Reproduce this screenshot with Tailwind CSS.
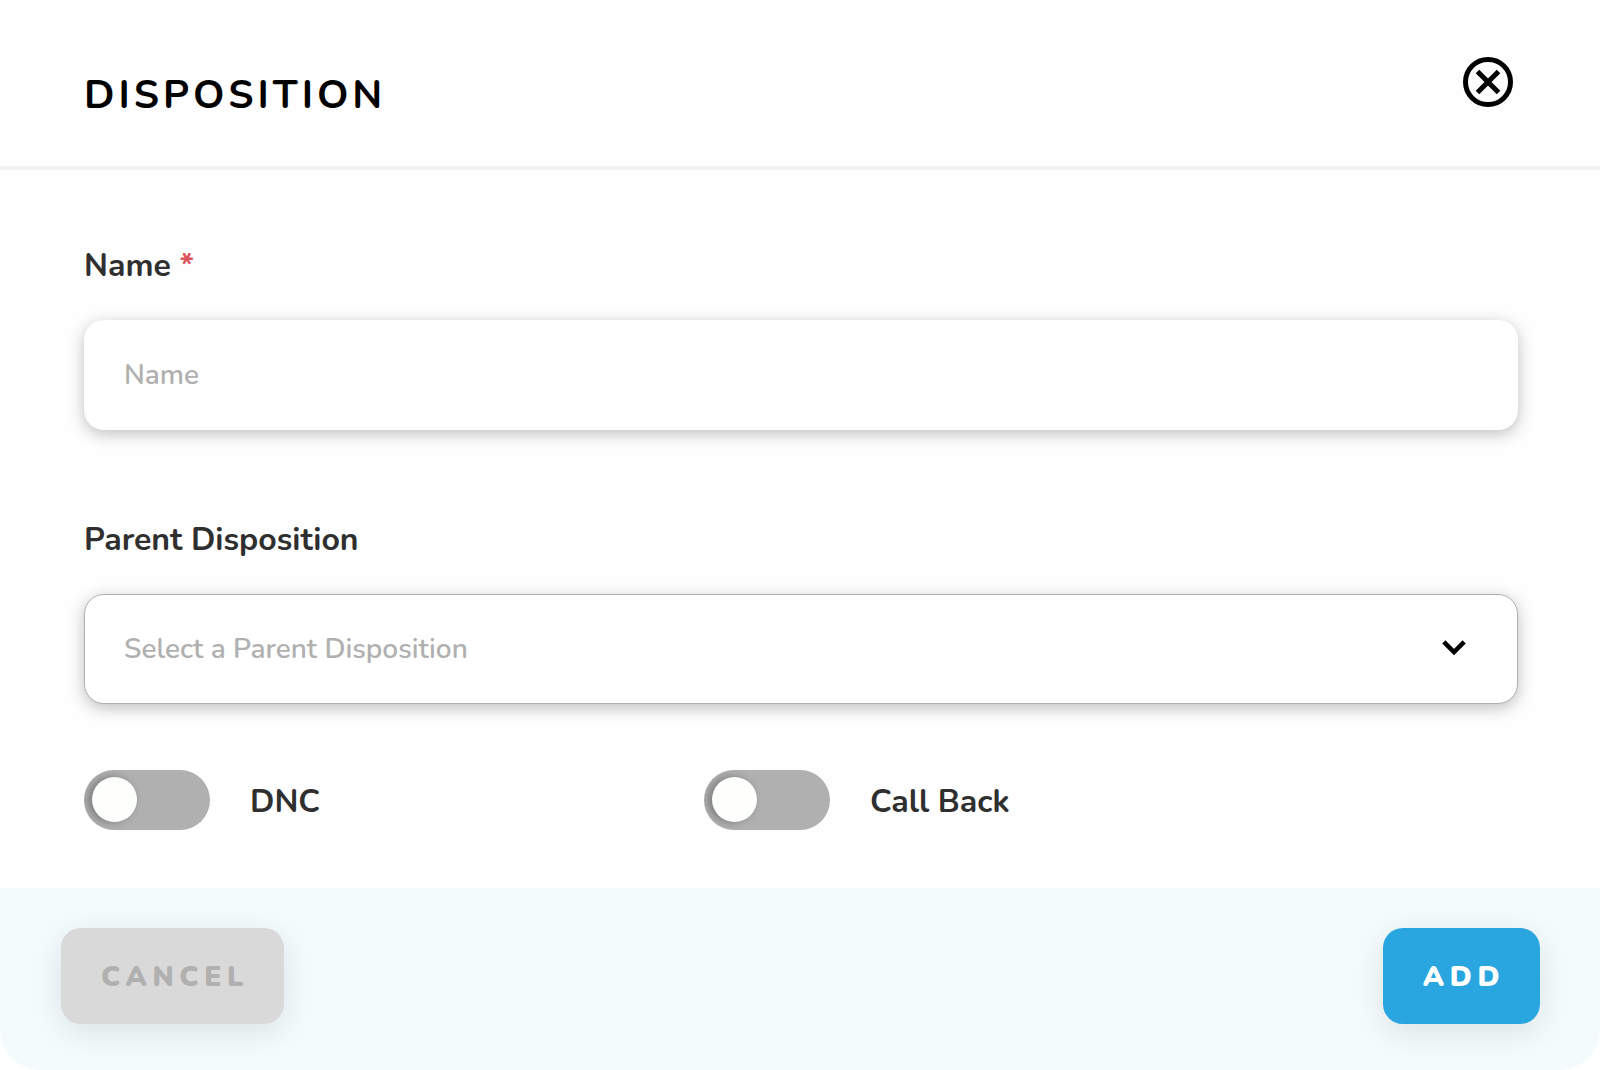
<!DOCTYPE html>
<html lang="en">
<head>
<meta charset="utf-8">
<meta name="viewport" content="width=device-width, initial-scale=1">
<title>Disposition</title>
<script src="https://cdn.jsdelivr.net/npm/@tailwindcss/browser@4"></script>
</head>
<body class="bg-white font-['Nunito','Lato',sans-serif] text-[#2f2f2f]">
<form class="flex min-h-screen flex-col overflow-hidden rounded-b-[40px] bg-[#fefefe]">
  <header class="flex items-start justify-between border-b-4 border-[#f2f2f2] pt-[57px] pr-[87px] pb-[47px] pl-[84px]">
    <h1 class="pt-3.5 text-[40px] leading-[48px] font-bold tracking-[4px] text-black">DISPOSITION</h1>
    <button type="button" aria-label="Close">
      <svg class="size-[50px]" viewBox="0 0 50 50" fill="none" stroke="#000" stroke-width="5">
        <circle cx="25" cy="25" r="22.5"/>
        <path d="M14.5 14.5 35.5 35.5M35.5 14.5 14.5 35.5"/>
      </svg>
    </button>
  </header>

  <main class="grow pt-[76px] pr-[82px] pb-[58px] pl-[84px]">
    <label for="name" class="block text-[32px] leading-10 font-bold">Name <span class="text-[#dc5461]">*</span></label>
    <input id="name" type="text" placeholder="Name" class="mt-[34px] block h-[110px] w-full rounded-[20px] bg-white px-10 text-[28px] font-semibold shadow-[0_4px_16px_rgba(0,0,0,0.25)] outline-none placeholder:text-[#b0b0b0]">

    <label for="parent" class="mt-[90px] block text-[32px] leading-10 font-bold">Parent Disposition</label>
    <div class="relative mt-[34px]">
      <select id="parent" class="block h-[110px] w-full appearance-none rounded-[20px] border border-[#b0b0b0] bg-white px-[39px] text-[28px] font-semibold text-[#b0b0b0] shadow-[0_4px_16px_rgba(0,0,0,0.25)] outline-none">
        <option>Select a Parent Disposition</option>
      </select>
      <svg class="pointer-events-none absolute top-[46px] right-[52px] h-4 w-6" viewBox="0 0 24 16" fill="none" stroke="#000" stroke-width="4.5">
        <path d="M1.8 1.8 12 12 22.2 1.8"/>
      </svg>
    </div>

    <div class="mt-[66px] grid grid-cols-[620fr_814fr]">
      <div class="flex items-center gap-10">
        <input id="dnc" type="checkbox" role="switch" class="h-[60px] w-[126px] shrink-0 appearance-none overflow-hidden rounded-full bg-[#b0b0b0] px-2 py-[7px] before:block before:size-[45px] before:rounded-full before:bg-[#fdfffd] before:shadow-[-4px_0_8px_rgba(0,0,0,0.3)] checked:bg-[#29a6e0] checked:before:ml-auto">
        <label for="dnc" class="pt-1 text-[32px] leading-10 font-bold">DNC</label>
      </div>
      <div class="flex items-center gap-10">
        <input id="callback" type="checkbox" role="switch" class="h-[60px] w-[126px] shrink-0 appearance-none overflow-hidden rounded-full bg-[#b0b0b0] px-2 py-[7px] before:block before:size-[45px] before:rounded-full before:bg-[#fdfffd] before:shadow-[-4px_0_8px_rgba(0,0,0,0.3)] checked:bg-[#29a6e0] checked:before:ml-auto">
        <label for="callback" class="pt-1 text-[32px] leading-10 font-bold">Call Back</label>
      </div>
    </div>
  </main>

  <footer class="flex justify-between bg-[#f3fbfd] pt-10 pr-[60px] pb-[46px] pl-[61px]">
    <button type="button" class="h-24 rounded-[20px] bg-[#d9d9d9] pt-0.5 pr-[35px] pl-10 text-[28px] font-black tracking-[0.2em] text-[#b0b0b0] shadow-[0_8px_32px_rgba(0,0,0,0.1)]">CANCEL</button>
    <button type="submit" class="h-24 rounded-[20px] bg-[#29a6e0] pt-0.5 pr-[35px] pl-10 text-[28px] font-black tracking-[0.2em] text-white shadow-[0_8px_32px_rgba(0,0,0,0.1)]">ADD</button>
  </footer>
</form>
</body>
</html>
